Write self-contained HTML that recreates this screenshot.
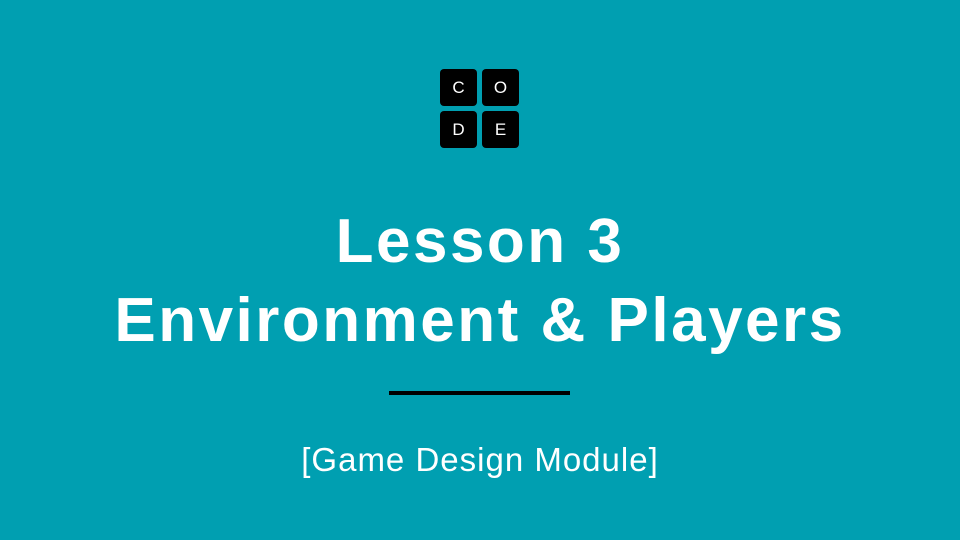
<!DOCTYPE html>
<html><head><style>
body{margin:0;width:960px;height:540px;background:#009fb1;position:relative;overflow:hidden;font-family:"Liberation Sans",sans-serif;color:#fff}
.b{position:absolute;width:37px;height:37px;background:#000;border-radius:4px;color:#fff;font-size:17px;line-height:38px;text-align:center}
.t{position:absolute;left:0;width:960px;text-align:center;font-weight:bold;font-size:62px;line-height:60px;letter-spacing:2.5px}
</style></head><body>
<div class="b" style="left:440px;top:69px">C</div>
<div class="b" style="left:482px;top:69px">O</div>
<div class="b" style="left:440px;top:111px">D</div>
<div class="b" style="left:482px;top:111px">E</div>
<div class="t" style="top:212px">Lesson 3</div>
<div class="t" style="top:291px">Environment &amp; Players</div>
<div style="position:absolute;left:389px;top:391px;width:181px;height:4px;background:#000"></div>
<div style="position:absolute;left:0;width:960px;top:442px;text-align:center;font-size:33px;line-height:36px;letter-spacing:1px">[Game Design Module]</div>
</body></html>
